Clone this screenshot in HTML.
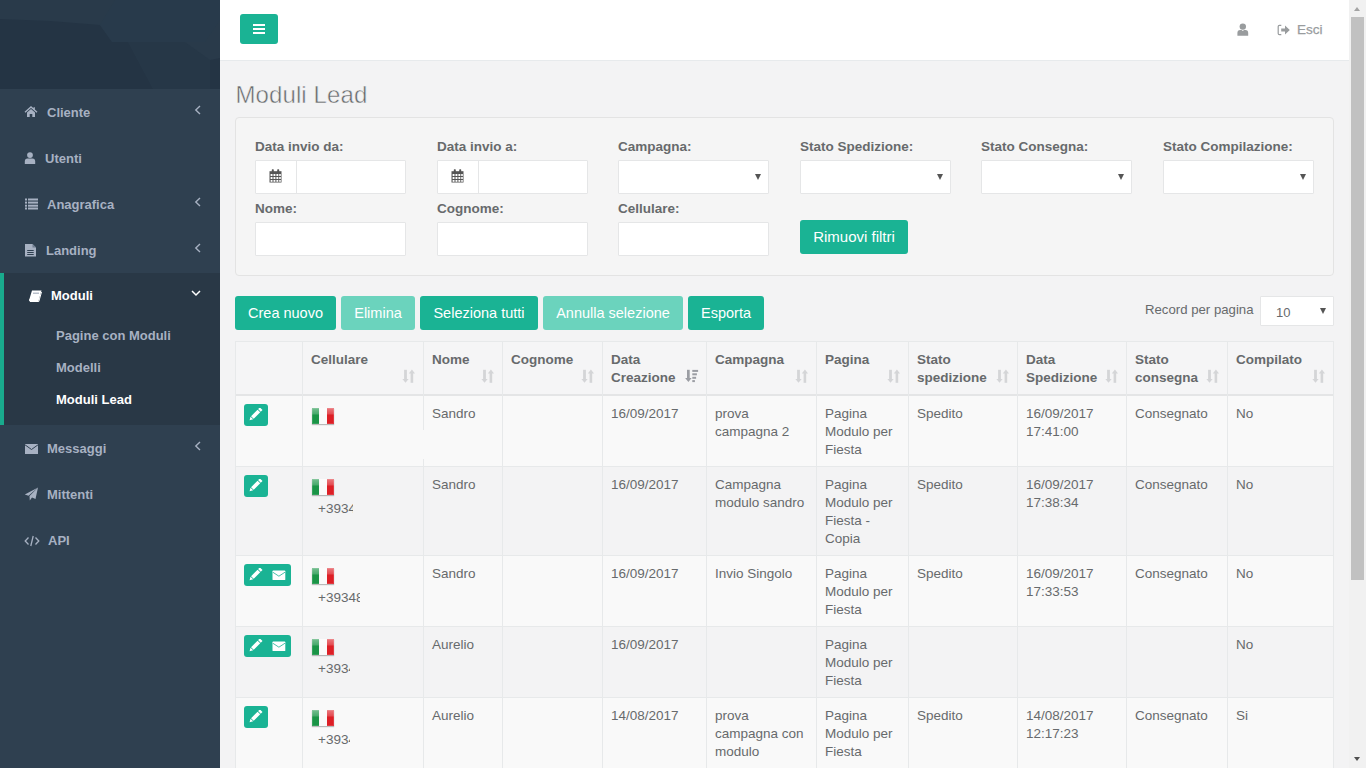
<!DOCTYPE html>
<html><head><meta charset="utf-8">
<style>
*{box-sizing:border-box;margin:0;padding:0}
html,body{width:1366px;height:768px;overflow:hidden}
body{position:relative;background:#f3f3f4;font-family:"Liberation Sans",sans-serif;color:#676a6c;font-size:13px}
.a{position:absolute}
#side{left:0;top:0;width:220px;height:768px;background:#2f4050}
.nav{position:absolute;left:0;width:220px;color:#a7b1c2;font-weight:bold;font-size:13px;line-height:16px;white-space:nowrap}
.nav svg{position:absolute}
.nav .t{position:absolute}
.car{position:absolute;left:194px}
#hdr{left:220px;top:0;width:1129px;height:61px;background:#fff;border-bottom:1px solid #e7eaec}
.btn{position:absolute;background:#1ab394;color:#fff;border-radius:3px;font-size:14.5px;text-align:center;white-space:nowrap}
.btn.dis{background:#6bd3bd}
.lbl{position:absolute;font-weight:bold;font-size:13.5px;line-height:16px;white-space:nowrap;color:#676a6c}
.inp{position:absolute;background:#fff;border:1px solid #e5e6e7;border-radius:1px;height:34px;width:152px}
.sel .ar{position:absolute;right:7px;top:13px;width:0;height:0;border-left:3.5px solid transparent;border-right:3.5px solid transparent;border-top:6px solid #555}
.vl{position:absolute;width:1px;background:#e7e9ea}
.hl{position:absolute;height:1px;background:#e7e9ea}
.cell{position:absolute;font-size:13.5px;line-height:18px;white-space:nowrap;color:#676a6c}
.th{position:absolute;font-size:13.5px;font-weight:bold;line-height:18px;white-space:nowrap;color:#676a6c}
</style></head><body>

<!-- SIDEBAR -->
<div id="side" class="a">
  <svg class="a" style="left:0;top:0" width="220" height="89" viewBox="0 0 220 89">
    <rect width="220" height="89" fill="#293a4a"/>
    <polygon points="0,19 50,21 100,25 112,42 128,42 153,89 0,89" fill="#243444"/>
    <polygon points="100,25 115,0 220,0 220,20 205,42 128,42 112,42" fill="#283a4b"/>
    <polygon points="128,42 185,42 210,60 210,89 153,89" fill="#263747"/>
    <polygon points="210,60 220,58 220,89 210,89" fill="#243444"/>
  </svg>
</div>


<!-- NAV -->
<div class="nav" style="top:273px;height:152px;background:#293846;border-left:4px solid #19aa8d"></div>
<div class="nav" style="top:0;height:768px;pointer-events:none">
  <!-- Cliente -->
  <svg style="left:24px;top:106px" width="14" height="12" viewBox="0 0 14 12"><path d="M1,6.2 L7,1 L13,6.2 M10.2,1.3 L10.2,3.4" stroke="#a7b1c2" stroke-width="1.4" fill="none"/><path d="M3,6.5 L7,3 L11,6.5 L11,11 L8.3,11 L8.3,8 L5.7,8 L5.7,11 L3,11Z" fill="#a7b1c2"/></svg>
  <div class="t" style="left:47px;top:105px">Cliente</div>
  <svg class="car" style="top:105px" width="8" height="10" viewBox="0 0 8 10"><path d="M6,1 L1.8,5 L6,9" stroke="#a7b1c2" stroke-width="1.4" fill="none"/></svg>
  <!-- Utenti -->
  <svg style="left:24px;top:152px" width="12" height="12" viewBox="0 0 12 12"><circle cx="6" cy="3.1" r="2.9" fill="#a7b1c2"/><path d="M0.8,12 L0.8,9.4 Q0.8,6.6 3.5,6.4 L8.5,6.4 Q11.2,6.6 11.2,9.4 L11.2,12Z" fill="#a7b1c2"/></svg>
  <div class="t" style="left:45px;top:151px">Utenti</div>
  <!-- Anagrafica -->
  <svg style="left:24px;top:198px" width="15" height="12" viewBox="0 0 15 12"><g fill="#a7b1c2"><rect x="1" y="0.5" width="2" height="2"/><rect x="4" y="0.5" width="10" height="2"/><rect x="1" y="3.6" width="2" height="2"/><rect x="4" y="3.6" width="10" height="2"/><rect x="1" y="6.7" width="2" height="2"/><rect x="4" y="6.7" width="10" height="2"/><rect x="1" y="9.5" width="2" height="2"/><rect x="4" y="9.5" width="10" height="2"/></g></svg>
  <div class="t" style="left:47px;top:197px">Anagrafica</div>
  <svg class="car" style="top:197px" width="8" height="10" viewBox="0 0 8 10"><path d="M6,1 L1.8,5 L6,9" stroke="#a7b1c2" stroke-width="1.4" fill="none"/></svg>
  <!-- Landing -->
  <svg style="left:24px;top:243px" width="13" height="14" viewBox="0 0 13 14"><path d="M1,1 L8.5,1 L12,4.5 L12,13.5 L1,13.5Z" fill="#a7b1c2"/><path d="M8.5,1 L8.5,4.5 L12,4.5" fill="#6f7d8f"/><g fill="#2f4050"><rect x="3.2" y="7" width="6.5" height="1"/><rect x="3.2" y="9" width="6.5" height="1"/><rect x="3.2" y="11" width="6.5" height="1"/></g></svg>
  <div class="t" style="left:46px;top:243px">Landing</div>
  <svg class="car" style="top:243px" width="8" height="10" viewBox="0 0 8 10"><path d="M6,1 L1.8,5 L6,9" stroke="#a7b1c2" stroke-width="1.4" fill="none"/></svg>
  <!-- Moduli -->
  <svg style="left:28px;top:289px" width="15" height="14" viewBox="0 0 15 14"><path d="M4,1.5 L13.5,1.5 L10.5,12 L1.2,12 Q0.6,10.5 1.5,9.8Z" fill="#fff"/><path d="M1.8,12.5 L10.8,12.5 L13.5,3" stroke="#fff" stroke-width="1" fill="none"/><rect x="5" y="3.5" width="6" height="1.5" fill="#b9c0cb"/></svg>
  <div class="t" style="left:51px;top:288px;color:#fff">Moduli</div>
  <svg style="left:190px;top:289px" width="12" height="9" viewBox="0 0 12 9"><path d="M2,2 L6,6 L10,2" stroke="#fff" stroke-width="1.5" fill="none"/></svg>
  <div class="t" style="left:56px;top:328px">Pagine con Moduli</div>
  <div class="t" style="left:56px;top:360px">Modelli</div>
  <div class="t" style="left:56px;top:392px;color:#fff">Moduli Lead</div>
  <!-- Messaggi -->
  <svg style="left:24px;top:443px" width="15" height="12" viewBox="0 0 15 12"><path d="M1,1 L14,1 L14,11 L1,11Z" fill="#a7b1c2"/><path d="M1,1.8 L7.5,6.5 L14,1.8" stroke="#2f4050" stroke-width="1" fill="none"/></svg>
  <div class="t" style="left:47px;top:441px">Messaggi</div>
  <svg class="car" style="top:441px" width="8" height="10" viewBox="0 0 8 10"><path d="M6,1 L1.8,5 L6,9" stroke="#a7b1c2" stroke-width="1.4" fill="none"/></svg>
  <!-- Mittenti -->
  <svg style="left:24px;top:487px" width="15" height="14" viewBox="0 0 15 14"><path d="M14,0.5 L0.8,7.5 L4.5,8.8 Z" fill="#a7b1c2"/><path d="M14,0.5 L5.5,9 L5.8,13.5 L8,10.5 L11.5,12Z" fill="#a7b1c2"/></svg>
  <div class="t" style="left:47px;top:487px">Mittenti</div>
  <!-- API -->
  <svg style="left:24px;top:535px" width="16" height="12" viewBox="0 0 16 12"><path d="M4.5,2.5 L1.2,6 L4.5,9.5 M11.5,2.5 L14.8,6 L11.5,9.5 M9.2,1 L6.8,11" stroke="#a7b1c2" stroke-width="1.3" fill="none"/></svg>
  <div class="t" style="left:48px;top:533px">API</div>
</div>

<!-- HEADER -->
<div id="hdr" class="a"></div>
<div class="btn" style="left:240px;top:14px;width:38px;height:30px">
  <svg class="a" style="left:12px;top:10px" width="14" height="10"><rect x="1" y="0" width="12" height="2" fill="#fff"/><rect x="1" y="4" width="12" height="2" fill="#fff"/><rect x="1" y="8" width="12" height="2" fill="#fff"/></svg>
</div>


<!-- HEADER RIGHT -->
<svg class="a" style="left:1237px;top:23px" width="12" height="13" viewBox="0 0 12 13"><circle cx="5.8" cy="3.6" r="3.2" fill="#999c9e"/><path d="M0.4,12.8 L0.4,10 Q0.4,7.2 3.2,7 L4.6,7 L5.8,8 L7,7 L8.4,7 Q11.2,7.2 11.2,10 L11.2,12.8Z" fill="#999c9e"/></svg>
<svg class="a" style="left:1277px;top:24px" width="14" height="12" viewBox="0 0 14 12"><path d="M4.3,1.4 L2.4,1.4 Q1.2,1.4 1.2,2.6 L1.2,9.4 Q1.2,10.6 2.4,10.6 L4.3,10.6" stroke="#999c9e" stroke-width="1.2" fill="none"/><path d="M4.2,4.4 L8,4.4 L8,1.4 L12.8,6 L8,10.6 L8,7.6 L4.2,7.6Z" fill="#999c9e"/></svg>
<div class="a" style="left:1297px;top:21px;font-size:13.5px;line-height:18px;color:#999c9e;-webkit-text-stroke:0.25px #999c9e">Esci</div>

<!-- TITLE -->
<div class="a" style="left:235.5px;top:81px;font-size:24px;line-height:28px;color:#676a6c;letter-spacing:0.1px;-webkit-text-stroke:0.5px #f3f3f4">Moduli Lead</div>

<!-- WELL -->
<div class="a" style="left:235px;top:117px;width:1099px;height:159px;background:#f5f5f5;border:1px solid #e3e3e3;border-radius:4px"></div>
<div class="lbl" style="left:255px;top:139px">Data invio da:</div>
<div class="inp" style="left:255px;top:160px;width:151px"></div>
<div class="a" style="left:296px;top:160px;width:1px;height:34px;background:#e5e6e7"></div>
<svg class="a" style="left:269px;top:169px" width="13" height="14" viewBox="0 0 13 14"><path d="M0.5,2.2 L12.5,2.2 L12.5,13.5 L0.5,13.5Z" fill="#555"/><rect x="2.8" y="0.3" width="2" height="3" rx="0.6" fill="#555"/><rect x="8.2" y="0.3" width="2" height="3" rx="0.6" fill="#555"/><g fill="#fff"><rect x="1.6" y="5" width="1.9" height="2"/><rect x="4.5" y="5" width="1.9" height="2"/><rect x="7.4" y="5" width="1.9" height="2"/><rect x="10.2" y="5" width="1.6" height="2"/><rect x="1.6" y="8" width="1.9" height="2"/><rect x="4.5" y="8" width="1.9" height="2"/><rect x="7.4" y="8" width="1.9" height="2"/><rect x="10.2" y="8" width="1.6" height="2"/><rect x="1.6" y="11" width="1.9" height="1.8"/><rect x="4.5" y="11" width="1.9" height="1.8"/><rect x="7.4" y="11" width="1.9" height="1.8"/><rect x="10.2" y="11" width="1.6" height="1.8"/></g></svg>
<div class="lbl" style="left:437px;top:139px">Data invio a:</div>
<div class="inp" style="left:437px;top:160px;width:151px"></div>
<div class="a" style="left:478px;top:160px;width:1px;height:34px;background:#e5e6e7"></div>
<svg class="a" style="left:451px;top:169px" width="13" height="14" viewBox="0 0 13 14"><path d="M0.5,2.2 L12.5,2.2 L12.5,13.5 L0.5,13.5Z" fill="#555"/><rect x="2.8" y="0.3" width="2" height="3" rx="0.6" fill="#555"/><rect x="8.2" y="0.3" width="2" height="3" rx="0.6" fill="#555"/><g fill="#fff"><rect x="1.6" y="5" width="1.9" height="2"/><rect x="4.5" y="5" width="1.9" height="2"/><rect x="7.4" y="5" width="1.9" height="2"/><rect x="10.2" y="5" width="1.6" height="2"/><rect x="1.6" y="8" width="1.9" height="2"/><rect x="4.5" y="8" width="1.9" height="2"/><rect x="7.4" y="8" width="1.9" height="2"/><rect x="10.2" y="8" width="1.6" height="2"/><rect x="1.6" y="11" width="1.9" height="1.8"/><rect x="4.5" y="11" width="1.9" height="1.8"/><rect x="7.4" y="11" width="1.9" height="1.8"/><rect x="10.2" y="11" width="1.6" height="1.8"/></g></svg>
<div class="lbl" style="left:618px;top:139px">Campagna:</div>
<div class="inp sel" style="left:618px;top:160px;width:151px"><div class="ar"></div></div>
<div class="lbl" style="left:800px;top:139px">Stato Spedizione:</div>
<div class="inp sel" style="left:800px;top:160px;width:151px"><div class="ar"></div></div>
<div class="lbl" style="left:981px;top:139px">Stato Consegna:</div>
<div class="inp sel" style="left:981px;top:160px;width:151px"><div class="ar"></div></div>
<div class="lbl" style="left:1163px;top:139px">Stato Compilazione:</div>
<div class="inp sel" style="left:1163px;top:160px;width:151px"><div class="ar"></div></div>
<div class="lbl" style="left:255px;top:201px">Nome:</div>
<div class="inp" style="left:255px;top:222px;width:151px"></div>
<div class="lbl" style="left:437px;top:201px">Cognome:</div>
<div class="inp" style="left:437px;top:222px;width:151px"></div>
<div class="lbl" style="left:618px;top:201px">Cellulare:</div>
<div class="inp" style="left:618px;top:222px;width:151px"></div>
<div class="btn" style="left:800px;top:220px;width:108px;height:34px;line-height:34px;font-size:15px">Rimuovi filtri</div>

<!-- ACTION BUTTONS -->
<div class="btn " style="left:235px;top:296px;width:101px;height:34px;line-height:34px">Crea nuovo</div>
<div class="btn dis" style="left:341px;top:296px;width:74px;height:34px;line-height:34px">Elimina</div>
<div class="btn " style="left:420px;top:296px;width:118px;height:34px;line-height:34px">Seleziona tutti</div>
<div class="btn dis" style="left:543px;top:296px;width:140px;height:34px;line-height:34px">Annulla selezione</div>
<div class="btn " style="left:688px;top:296px;width:76px;height:34px;line-height:34px">Esporta</div>
<div class="a" style="left:1145px;top:301px;font-size:13.2px;line-height:18px;white-space:nowrap">Record per pagina</div>
<div class="inp sel" style="left:1260px;top:296px;width:74px;height:30px"><div class="ar" style="top:11px;right:7px"></div><div class="a" style="left:15px;top:7px;font-size:13px;line-height:18px;color:#676a6c">10</div></div>

<!-- TABLE -->
<div class="a" style="left:235px;top:341px;width:1099px;height:427px;overflow:hidden">
<div class="a" style="left:0;top:0;width:1099px;height:54px;background:#f5f5f6"></div>
<div class="a" style="left:0;top:54px;width:1099px;height:71px;background:#f9f9f9"></div>
<div class="a" style="left:0;top:125px;width:1099px;height:89px;background:#f3f3f4"></div>
<div class="a" style="left:0;top:214px;width:1099px;height:71px;background:#f9f9f9"></div>
<div class="a" style="left:0;top:285px;width:1099px;height:71px;background:#f3f3f4"></div>
<div class="a" style="left:0;top:356px;width:1099px;height:71px;background:#f9f9f9"></div>
<div class="hl" style="left:0;top:0;width:1099px"></div>
<div class="hl" style="left:0;top:53px;width:1099px;height:2px;background:#e4e5e6"></div>
<div class="hl" style="left:0;top:125px;width:1099px"></div>
<div class="hl" style="left:0;top:214px;width:1099px"></div>
<div class="hl" style="left:0;top:285px;width:1099px"></div>
<div class="hl" style="left:0;top:356px;width:1099px"></div>
<div class="vl" style="left:0px;top:0;height:427px"></div>
<div class="vl" style="left:67px;top:0;height:427px"></div>
<div class="vl" style="left:188px;top:0;height:427px"></div>
<div class="vl" style="left:267px;top:0;height:427px"></div>
<div class="vl" style="left:367px;top:0;height:427px"></div>
<div class="vl" style="left:471px;top:0;height:427px"></div>
<div class="vl" style="left:581px;top:0;height:427px"></div>
<div class="vl" style="left:673px;top:0;height:427px"></div>
<div class="vl" style="left:782px;top:0;height:427px"></div>
<div class="vl" style="left:891px;top:0;height:427px"></div>
<div class="vl" style="left:992px;top:0;height:427px"></div>
<div class="vl" style="left:1098px;top:0;height:427px"></div>
<div class="th" style="left:76px;top:10px">Cellulare</div>
<svg class="a" style="left:167px;top:28px" width="14" height="14" viewBox="0 0 14 14"><g fill="#d4d5d7"><rect x="2.1" y="0.8" width="2.8" height="9.6"/><path d="M0.4,10 L6.6,10 L3.5,13.8Z"/><rect x="8.6" y="4" width="2.6" height="9.8"/><path d="M6.8,4.4 L13,4.4 L9.9,0.6Z"/></g></svg><div class="th" style="left:197px;top:10px">Nome</div>
<svg class="a" style="left:246px;top:28px" width="14" height="14" viewBox="0 0 14 14"><g fill="#d4d5d7"><rect x="2.1" y="0.8" width="2.8" height="9.6"/><path d="M0.4,10 L6.6,10 L3.5,13.8Z"/><rect x="8.6" y="4" width="2.6" height="9.8"/><path d="M6.8,4.4 L13,4.4 L9.9,0.6Z"/></g></svg><div class="th" style="left:276px;top:10px">Cognome</div>
<svg class="a" style="left:346px;top:28px" width="14" height="14" viewBox="0 0 14 14"><g fill="#d4d5d7"><rect x="2.1" y="0.8" width="2.8" height="9.6"/><path d="M0.4,10 L6.6,10 L3.5,13.8Z"/><rect x="8.6" y="4" width="2.6" height="9.8"/><path d="M6.8,4.4 L13,4.4 L9.9,0.6Z"/></g></svg><div class="th" style="left:376px;top:10px">Data<br>Creazione</div>
<svg class="a" style="left:450px;top:28px" width="14" height="14" viewBox="0 0 14 14"><g fill="#9b9da3"><rect x="2" y="0.8" width="2.7" height="9"/><path d="M0.1,9 L6.6,9 L3.35,13Z"/><rect x="7.3" y="0.9" width="5.8" height="2"/><rect x="7.3" y="4.3" width="4.6" height="2"/><rect x="7.3" y="7.8" width="3.8" height="2"/><rect x="7.3" y="11.1" width="2.6" height="2"/></g></svg><div class="th" style="left:480px;top:10px">Campagna</div>
<svg class="a" style="left:560px;top:28px" width="14" height="14" viewBox="0 0 14 14"><g fill="#d4d5d7"><rect x="2.1" y="0.8" width="2.8" height="9.6"/><path d="M0.4,10 L6.6,10 L3.5,13.8Z"/><rect x="8.6" y="4" width="2.6" height="9.8"/><path d="M6.8,4.4 L13,4.4 L9.9,0.6Z"/></g></svg><div class="th" style="left:590px;top:10px">Pagina</div>
<svg class="a" style="left:652px;top:28px" width="14" height="14" viewBox="0 0 14 14"><g fill="#d4d5d7"><rect x="2.1" y="0.8" width="2.8" height="9.6"/><path d="M0.4,10 L6.6,10 L3.5,13.8Z"/><rect x="8.6" y="4" width="2.6" height="9.8"/><path d="M6.8,4.4 L13,4.4 L9.9,0.6Z"/></g></svg><div class="th" style="left:682px;top:10px">Stato<br>spedizione</div>
<svg class="a" style="left:761px;top:28px" width="14" height="14" viewBox="0 0 14 14"><g fill="#d4d5d7"><rect x="2.1" y="0.8" width="2.8" height="9.6"/><path d="M0.4,10 L6.6,10 L3.5,13.8Z"/><rect x="8.6" y="4" width="2.6" height="9.8"/><path d="M6.8,4.4 L13,4.4 L9.9,0.6Z"/></g></svg><div class="th" style="left:791px;top:10px">Data<br>Spedizione</div>
<svg class="a" style="left:870px;top:28px" width="14" height="14" viewBox="0 0 14 14"><g fill="#d4d5d7"><rect x="2.1" y="0.8" width="2.8" height="9.6"/><path d="M0.4,10 L6.6,10 L3.5,13.8Z"/><rect x="8.6" y="4" width="2.6" height="9.8"/><path d="M6.8,4.4 L13,4.4 L9.9,0.6Z"/></g></svg><div class="th" style="left:900px;top:10px">Stato<br>consegna</div>
<svg class="a" style="left:971px;top:28px" width="14" height="14" viewBox="0 0 14 14"><g fill="#d4d5d7"><rect x="2.1" y="0.8" width="2.8" height="9.6"/><path d="M0.4,10 L6.6,10 L3.5,13.8Z"/><rect x="8.6" y="4" width="2.6" height="9.8"/><path d="M6.8,4.4 L13,4.4 L9.9,0.6Z"/></g></svg><div class="th" style="left:1001px;top:10px">Compilato</div>
<svg class="a" style="left:1077px;top:28px" width="14" height="14" viewBox="0 0 14 14"><g fill="#d4d5d7"><rect x="2.1" y="0.8" width="2.8" height="9.6"/><path d="M0.4,10 L6.6,10 L3.5,13.8Z"/><rect x="8.6" y="4" width="2.6" height="9.8"/><path d="M6.8,4.4 L13,4.4 L9.9,0.6Z"/></g></svg><div class="btn" style="left:9px;top:63px;width:24px;height:22px"></div>
<svg class="a" style="left:14px;top:67px" width="14" height="14" viewBox="0 0 14 14"><path transform="translate(-0.4,-1.3) scale(1.08)" d="M0.9,12.6 L4.26,11.72 L1.78,9.24Z M4.75,11.22 L10.76,5.21 L8.29,2.74 L2.28,8.75Z M11.26,4.72 L12.89,3.09 L10.41,0.61 L8.78,2.24Z" fill="#fff"/></svg>
<div class="a" style="left:77px;top:67px;width:22px;height:16px;box-shadow:0 1px 1px rgba(0,0,0,.25);background:linear-gradient(to right,#1a9446 0,#1a9446 7px,#fafafa 7px,#fafafa 15px,#dd1f26 15px);"><div class="a" style="left:0;top:0;width:22px;height:7px;background:linear-gradient(rgba(255,255,255,.4),rgba(255,255,255,.2) 85%,rgba(255,255,255,0))"></div><div class="a" style="left:0;top:0;width:22px;height:16px;box-shadow:inset 0 0 0 1px rgba(255,255,255,.12)"></div></div>
<div class="cell" style="left:197px;top:64px">Sandro</div>
<div class="cell" style="left:376px;top:64px">16/09/2017</div>
<div class="cell" style="left:480px;top:64px">prova<br>campagna 2</div>
<div class="cell" style="left:590px;top:64px">Pagina<br>Modulo per<br>Fiesta</div>
<div class="cell" style="left:682px;top:64px">Spedito</div>
<div class="cell" style="left:791px;top:64px">16/09/2017<br>17:41:00</div>
<div class="cell" style="left:900px;top:64px">Consegnato</div>
<div class="cell" style="left:1001px;top:64px">No</div>
<div class="btn" style="left:9px;top:134px;width:24px;height:22px"></div>
<svg class="a" style="left:14px;top:138px" width="14" height="14" viewBox="0 0 14 14"><path transform="translate(-0.4,-1.3) scale(1.08)" d="M0.9,12.6 L4.26,11.72 L1.78,9.24Z M4.75,11.22 L10.76,5.21 L8.29,2.74 L2.28,8.75Z M11.26,4.72 L12.89,3.09 L10.41,0.61 L8.78,2.24Z" fill="#fff"/></svg>
<div class="a" style="left:77px;top:138px;width:22px;height:16px;box-shadow:0 1px 1px rgba(0,0,0,.25);background:linear-gradient(to right,#1a9446 0,#1a9446 7px,#fafafa 7px,#fafafa 15px,#dd1f26 15px);"><div class="a" style="left:0;top:0;width:22px;height:7px;background:linear-gradient(rgba(255,255,255,.4),rgba(255,255,255,.2) 85%,rgba(255,255,255,0))"></div><div class="a" style="left:0;top:0;width:22px;height:16px;box-shadow:inset 0 0 0 1px rgba(255,255,255,.12)"></div></div>
<div class="cell" style="left:83px;top:159px;width:35px;overflow:hidden">+39345</div>
<div class="cell" style="left:197px;top:135px">Sandro</div>
<div class="cell" style="left:376px;top:135px">16/09/2017</div>
<div class="cell" style="left:480px;top:135px">Campagna<br>modulo sandro</div>
<div class="cell" style="left:590px;top:135px">Pagina<br>Modulo per<br>Fiesta -<br>Copia</div>
<div class="cell" style="left:682px;top:135px">Spedito</div>
<div class="cell" style="left:791px;top:135px">16/09/2017<br>17:38:34</div>
<div class="cell" style="left:900px;top:135px">Consegnato</div>
<div class="cell" style="left:1001px;top:135px">No</div>
<div class="btn" style="left:9px;top:223px;width:47px;height:22px"></div>
<svg class="a" style="left:14px;top:227px" width="14" height="14" viewBox="0 0 14 14"><path transform="translate(-0.4,-1.3) scale(1.08)" d="M0.9,12.6 L4.26,11.72 L1.78,9.24Z M4.75,11.22 L10.76,5.21 L8.29,2.74 L2.28,8.75Z M11.26,4.72 L12.89,3.09 L10.41,0.61 L8.78,2.24Z" fill="#fff"/></svg>
<svg class="a" style="left:37.39999999999998px;top:228.60000000000002px" width="14" height="11" viewBox="0 0 14 11"><rect x="0.5" y="0.5" width="12.8" height="9.6" rx="0.7" fill="#fff"/><path d="M0.8,2.2 L6.9,6.2 L13,2.2" stroke="#1ab394" stroke-width="0.8" fill="none"/></svg>
<div class="a" style="left:77px;top:227px;width:22px;height:16px;box-shadow:0 1px 1px rgba(0,0,0,.25);background:linear-gradient(to right,#1a9446 0,#1a9446 7px,#fafafa 7px,#fafafa 15px,#dd1f26 15px);"><div class="a" style="left:0;top:0;width:22px;height:7px;background:linear-gradient(rgba(255,255,255,.4),rgba(255,255,255,.2) 85%,rgba(255,255,255,0))"></div><div class="a" style="left:0;top:0;width:22px;height:16px;box-shadow:inset 0 0 0 1px rgba(255,255,255,.12)"></div></div>
<div class="cell" style="left:83px;top:248px;width:42px;overflow:hidden">+393481</div>
<div class="cell" style="left:197px;top:224px">Sandro</div>
<div class="cell" style="left:376px;top:224px">16/09/2017</div>
<div class="cell" style="left:480px;top:224px">Invio Singolo</div>
<div class="cell" style="left:590px;top:224px">Pagina<br>Modulo per<br>Fiesta</div>
<div class="cell" style="left:682px;top:224px">Spedito</div>
<div class="cell" style="left:791px;top:224px">16/09/2017<br>17:33:53</div>
<div class="cell" style="left:900px;top:224px">Consegnato</div>
<div class="cell" style="left:1001px;top:224px">No</div>
<div class="btn" style="left:9px;top:294px;width:47px;height:22px"></div>
<svg class="a" style="left:14px;top:298px" width="14" height="14" viewBox="0 0 14 14"><path transform="translate(-0.4,-1.3) scale(1.08)" d="M0.9,12.6 L4.26,11.72 L1.78,9.24Z M4.75,11.22 L10.76,5.21 L8.29,2.74 L2.28,8.75Z M11.26,4.72 L12.89,3.09 L10.41,0.61 L8.78,2.24Z" fill="#fff"/></svg>
<svg class="a" style="left:37.39999999999998px;top:299.6px" width="14" height="11" viewBox="0 0 14 11"><rect x="0.5" y="0.5" width="12.8" height="9.6" rx="0.7" fill="#fff"/><path d="M0.8,2.2 L6.9,6.2 L13,2.2" stroke="#1ab394" stroke-width="0.8" fill="none"/></svg>
<div class="a" style="left:77px;top:298px;width:22px;height:16px;box-shadow:0 1px 1px rgba(0,0,0,.25);background:linear-gradient(to right,#1a9446 0,#1a9446 7px,#fafafa 7px,#fafafa 15px,#dd1f26 15px);"><div class="a" style="left:0;top:0;width:22px;height:7px;background:linear-gradient(rgba(255,255,255,.4),rgba(255,255,255,.2) 85%,rgba(255,255,255,0))"></div><div class="a" style="left:0;top:0;width:22px;height:16px;box-shadow:inset 0 0 0 1px rgba(255,255,255,.12)"></div></div>
<div class="cell" style="left:83px;top:319px;width:32px;overflow:hidden">+39345</div>
<div class="cell" style="left:197px;top:295px">Aurelio</div>
<div class="cell" style="left:376px;top:295px">16/09/2017</div>
<div class="cell" style="left:590px;top:295px">Pagina<br>Modulo per<br>Fiesta</div>
<div class="cell" style="left:1001px;top:295px">No</div>
<div class="btn" style="left:9px;top:365px;width:24px;height:22px"></div>
<svg class="a" style="left:14px;top:369px" width="14" height="14" viewBox="0 0 14 14"><path transform="translate(-0.4,-1.3) scale(1.08)" d="M0.9,12.6 L4.26,11.72 L1.78,9.24Z M4.75,11.22 L10.76,5.21 L8.29,2.74 L2.28,8.75Z M11.26,4.72 L12.89,3.09 L10.41,0.61 L8.78,2.24Z" fill="#fff"/></svg>
<div class="a" style="left:77px;top:369px;width:22px;height:16px;box-shadow:0 1px 1px rgba(0,0,0,.25);background:linear-gradient(to right,#1a9446 0,#1a9446 7px,#fafafa 7px,#fafafa 15px,#dd1f26 15px);"><div class="a" style="left:0;top:0;width:22px;height:7px;background:linear-gradient(rgba(255,255,255,.4),rgba(255,255,255,.2) 85%,rgba(255,255,255,0))"></div><div class="a" style="left:0;top:0;width:22px;height:16px;box-shadow:inset 0 0 0 1px rgba(255,255,255,.12)"></div></div>
<div class="cell" style="left:83px;top:390px;width:32px;overflow:hidden">+39345</div>
<div class="cell" style="left:197px;top:366px">Aurelio</div>
<div class="cell" style="left:376px;top:366px">14/08/2017</div>
<div class="cell" style="left:480px;top:366px">prova<br>campagna con<br>modulo</div>
<div class="cell" style="left:590px;top:366px">Pagina<br>Modulo per<br>Fiesta</div>
<div class="cell" style="left:682px;top:366px">Spedito</div>
<div class="cell" style="left:791px;top:366px">14/08/2017<br>12:17:23</div>
<div class="cell" style="left:900px;top:366px">Consegnato</div>
<div class="cell" style="left:1001px;top:366px">Si</div>
<div class="a" style="left:83px;top:89px;width:106px;height:29px;background:#f9f9f9"></div>
</div>

<!-- SCROLLBAR -->
<div class="a" style="left:1349px;top:0;width:17px;height:768px;background:#f1f1f1"></div>
<div class="a" style="left:1351px;top:17px;width:13px;height:563px;background:#c1c1c1"></div>
<div class="a" style="left:1354px;top:7px;width:0;height:0;border-left:3.5px solid transparent;border-right:3.5px solid transparent;border-bottom:4px solid #a3a3a3"></div>
<div class="a" style="left:1354px;top:757px;width:0;height:0;border-left:3.5px solid transparent;border-right:3.5px solid transparent;border-top:4px solid #505050"></div>

</body></html>
